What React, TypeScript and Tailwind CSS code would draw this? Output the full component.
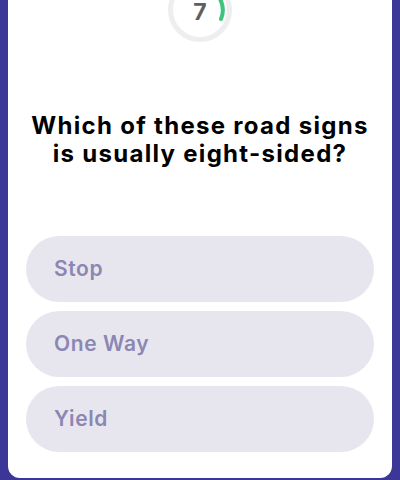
import React from 'react';

const options = ['Stop', 'One Way', 'Yield'];

function Timer() {
  return (
    <div className="relative mx-auto -mt-[22px] h-[64px] w-[64px]">
      <svg width="64" height="64" viewBox="0 0 64 64" className="absolute inset-0">
        <circle cx="32" cy="32" r="29.5" fill="#fff" stroke="#eeeef0" strokeWidth="5" />
        <path
          d="M 38 9.5 A 23.5 23.5 0 0 1 53 41"
          fill="none"
          stroke="#3cc47c"
          strokeWidth="4"
          strokeLinecap="round"
        />
      </svg>
      <div className="absolute inset-x-0 top-[23px] text-center text-[23px] font-bold leading-none text-[#5f5f5f]">
        7
      </div>
    </div>
  );
}

export default function App() {
  return (
    <div className="h-[480px] w-[400px] bg-[#3b3698] px-2 pb-[2px] font-['Inter',sans-serif]">
      <div className="flex h-full flex-col rounded-b-[12px] bg-white">
        <Timer />
        <h1 className="mt-[70px] text-center text-[24px] font-bold leading-[28px] tracking-[1.3px] text-black">
          Which of these road signs
          <br />
          is usually eight-sided?
        </h1>
        <div className="mt-[68px] flex flex-col gap-[9px] px-[18px]">
          {options.map((o) => (
            <button
              key={o}
              className="flex h-[66px] items-center rounded-full bg-[#e7e6ee] pl-[28px] text-[21px] font-semibold tracking-[0.6px] text-[#8b87b3]"
            >
              {o}
            </button>
          ))}
        </div>
      </div>
    </div>
  );
}
